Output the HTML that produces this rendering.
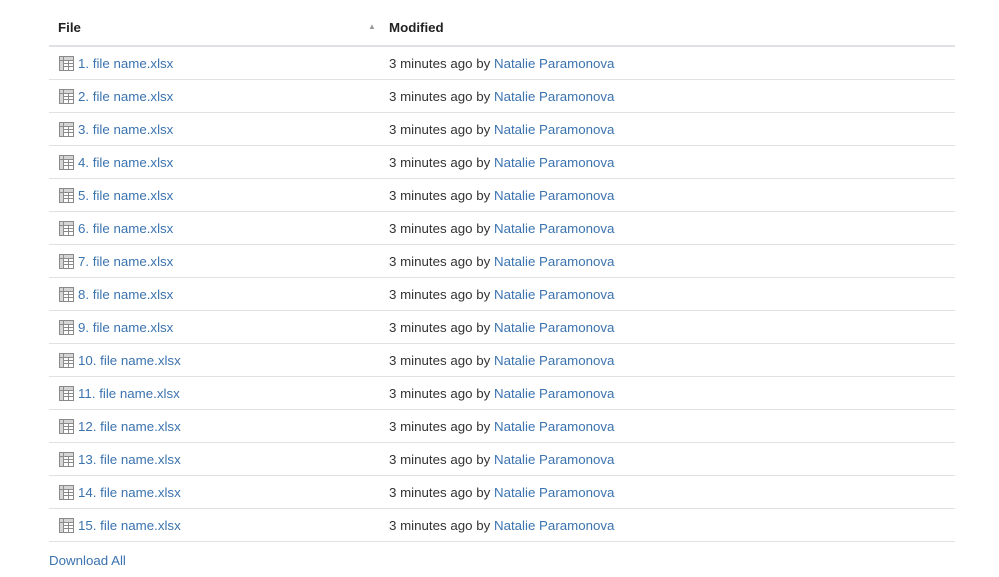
<!DOCTYPE html>
<html><head><meta charset="utf-8"><style>
body{margin:0;background:#fff;font-family:"Liberation Sans",Arial,sans-serif;font-size:13.3px;color:#333;}
.wrap{position:absolute;left:49px;top:0;width:906px;}
.hdr{height:45px;border-bottom:2px solid #dfe1e5;position:relative;font-weight:bold;color:#222;}
.hdr span{position:absolute;top:20px;}
.row{height:32px;border-bottom:1px solid #dfe1e5;position:relative;}
.row .f{position:absolute;left:10px;top:9px;display:flex;align-items:center;}
.row .m{position:absolute;left:340px;top:9px;}
a{color:#3b73af;text-decoration:none;}
svg{margin-right:4px;}
.dl{position:absolute;left:49px;top:553px;}
</style></head><body>
<div class="wrap">
<div class="hdr"><span style="left:9px">File</span><span style="left:319px;font-size:8px;top:22px;color:#999">▲</span><span style="left:340px">Modified</span></div>
<div id="rows"></div>
</div>
<a class="dl">Download All</a>
<script>
var h='';for(var i=1;i<=15;i++){h+='<div class="row"><div class="f"><svg width="15" height="15" viewBox="0 0 15 15"><rect x="0.5" y="0.5" width="14" height="14" fill="none" stroke="#8a8a8a"/><rect x="1" y="1" width="13" height="3.5" fill="#d5d5d5"/><rect x="1" y="1" width="3.5" height="13" fill="#d5d5d5"/><path d="M4.5 1V14M0.5 4.5H14.5M4.5 7.5H14.5M4.5 10.5H14.5M9.5 4.5V14" stroke="#8a8a8a" fill="none"/></svg><a>'+i+'. file name.xlsx</a></div><div class="m">3 minutes ago by <a>Natalie Paramonova</a></div></div>';}
document.getElementById('rows').innerHTML=h;
</script>
</body></html>
